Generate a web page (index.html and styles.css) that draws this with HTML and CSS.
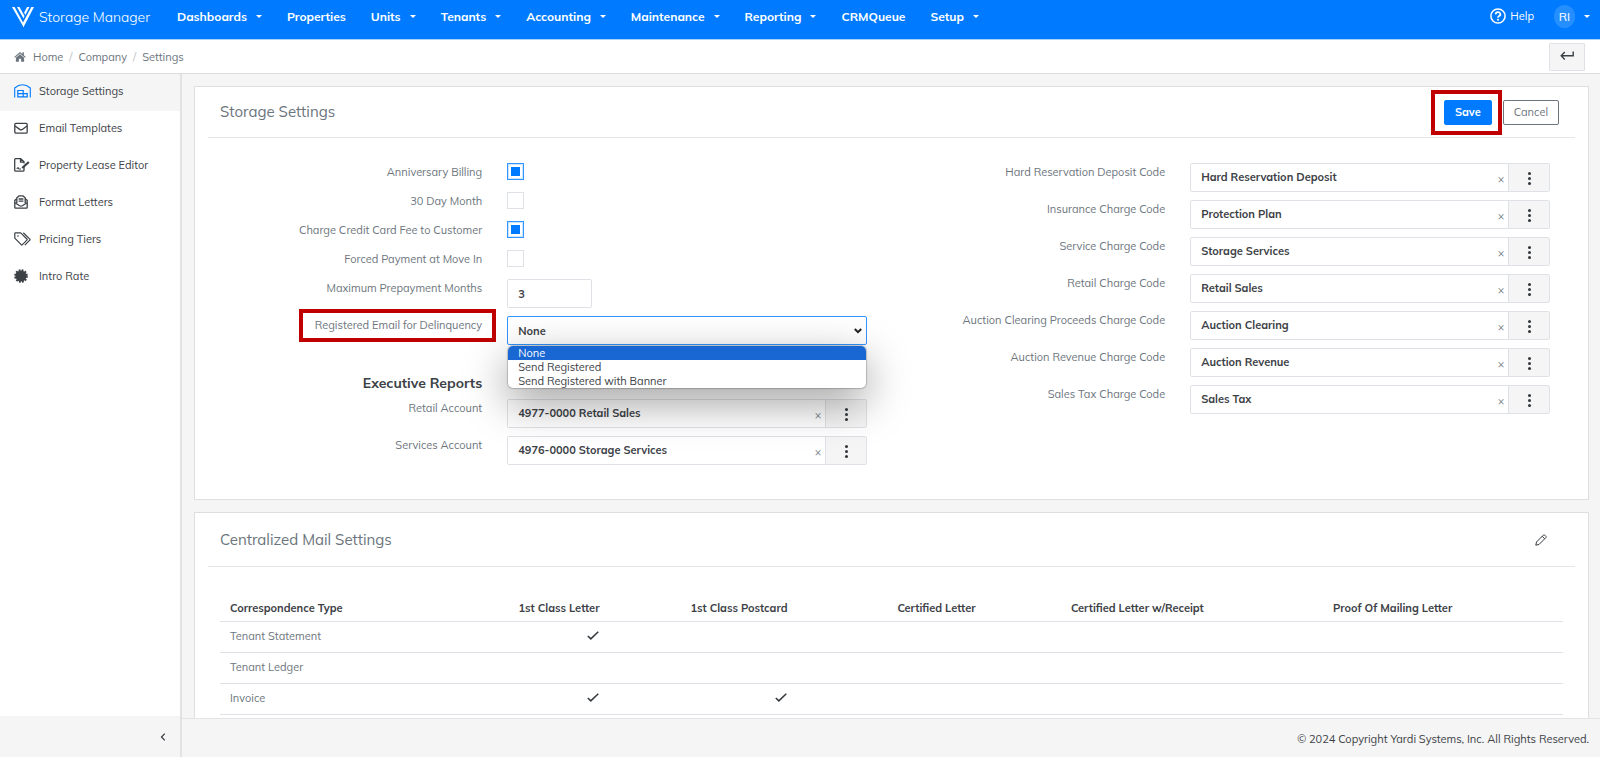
FILE: index.html
```html
<!DOCTYPE html>
<html lang="en">
<head>
    <meta charset="UTF-8">
    <meta name="viewport" content="width=device-width, initial-scale=1.0">
    <title>Storage Settings</title>
    <link rel="stylesheet" href="styles.css">
</head>
<body>
    <header class="navbar">
        <a class="brand" href="#">
            <svg class="brand-logo" viewBox="0 0 22 20" width="22" height="20" aria-hidden="true">
                <path d="M0 0h2.600l8.900 16.500V20z" fill="#fff"/>
                <path d="M5 0h2.500l5 9-1 2.500z" fill="#fff"/>
                <path d="M22 0h-2.600L11 15.500V20h.6z" fill="#fff"/>
                <path d="M17.500 0h-2.400l-3 5.500 1.200 2.400z" fill="#fff"/>
            </svg>
            <span>Storage Manager</span>
        </a>
        <nav class="menu">
            <a class="has-caret" href="#">Dashboards</a>
            <a href="#">Properties</a>
            <a class="has-caret" href="#">Units</a>
            <a class="has-caret" href="#">Tenants</a>
            <a class="has-caret" href="#">Accounting</a>
            <a class="has-caret" href="#">Maintenance</a>
            <a class="has-caret" href="#">Reporting</a>
            <a href="#">CRMQueue</a>
            <a class="has-caret" href="#">Setup</a>
        </nav>
        <div class="user">
            <a class="help" href="#">
                <svg viewBox="0 0 16 16" width="16" height="16" fill="none" stroke="#fff" aria-hidden="true">
                    <circle cx="8" cy="8" r="7.100" stroke-width="1.500"/>
                    <path d="M5.700 6.400a2.300 2.100 0 1 1 3.400 1.700C8.300 8.500 8 8.900 8 9.700" stroke-width="1.700"/>
                    <circle cx="8" cy="11.800" r="1" fill="#fff" stroke="none"/>
                </svg>
                <span>Help</span>
            </a>
            <button class="account has-caret" type="button"><span class="avatar">RI</span></button>
        </div>
    </header>

    <div class="crumb-bar">
        <nav class="crumbs" aria-label="Breadcrumb">
            <svg viewBox="0 0 14 12" width="12" height="11" fill="#6c757d" aria-hidden="true">
                <path d="M7 .8.300 6.500l.8.900L7 2.500l5.900 4.900.8-.9-2.200-1.900V1H9.800v2.200z"/>
                <path d="M2.200 7.400V12h3.500V8.700h2.600V12h3.500V7.400L7 3.500z"/>
            </svg>
            <a href="#">Home</a>
            <span class="slash">/</span>
            <a href="#">Company</a>
            <span class="slash">/</span>
            <a href="#">Settings</a>
        </nav>
        <button class="back" type="button" aria-label="Back">
            <svg viewBox="0 0 14 10" width="14" height="10" fill="none" stroke="#3c4146" stroke-width="1.400" aria-hidden="true">
                <path d="M13.200.5v4.300H1.200M4.800 1 1.200 4.800l3.600 3.700"/>
            </svg>
        </button>
    </div>

    <div class="page">
        <aside class="sidebar">
            <nav class="side-nav">
                <a class="active" href="#">
                    <svg viewBox="0 0 17 14" width="17" height="14" fill="none" stroke="#007bff" stroke-width="1.200" aria-hidden="true">
                        <path d="M.7 13.500V4C3 2 5.500.7 8.500.7S14 2 16.300 4v9.500" stroke-width="1.100"/>
                        <path d="M3.800 12.800V6.500h5.400v3.200h4v3.100zM3.800 9.700h5.400v3.100"/>
                    </svg>
                    Storage Settings
                </a>
                <a href="#">
                    <svg viewBox="0 0 14 12" width="14" height="12" fill="none" stroke="#3c4146" stroke-width="1.300" aria-hidden="true">
                        <rect x=".8" y="1.300" width="12.400" height="9.900" rx="1.200"/>
                        <path d="m1 4 4.700 3.400c.8.600 1.800.6 2.600 0L13 4"/>
                    </svg>
                    Email Templates
                </a>
                <a href="#">
                    <svg viewBox="0 0 16 14" width="16" height="14" fill="none" stroke="#3c4146" stroke-width="1.300" aria-hidden="true">
                        <path d="M10 8.600v3.600c0 .6-.4 1-1 1H1.700c-.6 0-1-.4-1-1V1.700c0-.6.400-1 1-1h5l3.300 3.200v1.600M6.500.8v3.400H10"/>
                        <path d="M2.800 11c1.200-2 1.500-1.500 1.900-.3.500.4 1 .3 2.300.3" stroke-width="1.100"/>
                        <path d="m8.200 10 6.600-6" stroke-width="2.200"/>
                    </svg>
                    Property Lease Editor
                </a>
                <a href="#">
                    <svg viewBox="0 0 14 14" width="14" height="14" fill="none" stroke="#3c4146" stroke-width="1.300" aria-hidden="true">
                        <path d="M2.800 3.800.8 5.400v7c0 .5.300.8.800.8h10.800c.5 0 .8-.3.800-.8v-7l-2-1.600"/>
                        <path d="M2.800 8V2.800L5 .9h4l2.200 1.900V8M1 7.800l4.600 3c.9.500 1.900.5 2.800 0l4.600-3"/>
                        <path d="M4.600 4h4.800M4.600 6.200h4.800" stroke-width="1.300"/>
                    </svg>
                    Format Letters
                </a>
                <a href="#">
                    <svg viewBox="0 0 17 14" width="17" height="14" fill="none" stroke="#3c4146" stroke-width="1.200" stroke-linejoin="round" aria-hidden="true">
                        <path d="M.8 1.500v4.700l6.400 6.500c.4.400.8.400 1.200 0l4.500-4.500c.4-.4.400-.8 0-1.200L6.700.8H1.500c-.4 0-.7.300-.7.700z"/>
                        <path d="m9.300.8 6.500 6.300c.4.400.4.700 0 1.100l-5 5"/>
                        <circle cx="4" cy="4" r=".8" fill="#3c4146" stroke="none"/>
                    </svg>
                    Pricing Tiers
                </a>
                <a href="#">
                    <svg viewBox="0 0 14 14" width="14" height="14" aria-hidden="true">
                        <circle cx="7" cy="7" r="5.600" fill="#3c4146"/>
                        <circle cx="7" cy="7" r="5.800" fill="none" stroke="#3c4146" stroke-width="2" stroke-dasharray="1.800 1.236"/>
                    </svg>
                    Intro Rate
                </a>
            </nav>
            <button class="collapse" type="button" aria-label="Collapse menu">
                <svg viewBox="0 0 6 8" width="6" height="8" fill="none" stroke="#33383d" stroke-width="1.200" aria-hidden="true"><path d="M4.800.7 1.500 4l3.300 3.300"/></svg>
            </button>
        </aside>

        <div class="content">
            <main class="scroll">
                <section class="card">
                    <div class="card-head">
                        <h2>Storage Settings</h2>
                        <div class="actions">
                            <span class="marker marker-save"><button class="btn btn-primary" type="button">Save</button></span>
                            <button class="btn btn-outline" type="button">Cancel</button>
                        </div>
                    </div>
                    <form class="settings">
                        <div class="column">
                            <div class="row row-check">
                                <label for="anniversary">Anniversary Billing</label>
                                <div class="field"><input id="anniversary" type="checkbox" checked></div>
                            </div>
                            <div class="row row-check">
                                <label for="day-month">30 Day Month</label>
                                <div class="field"><input id="day-month" type="checkbox"></div>
                            </div>
                            <div class="row row-check">
                                <label for="card-fee">Charge Credit Card Fee to Customer</label>
                                <div class="field"><input id="card-fee" type="checkbox" checked></div>
                            </div>
                            <div class="row row-check">
                                <label for="forced">Forced Payment at Move In</label>
                                <div class="field"><input id="forced" type="checkbox"></div>
                            </div>
                            <div class="row">
                                <label for="prepay">Maximum Prepayment Months</label>
                                <div class="field"><input class="control short" id="prepay" type="text" value="3"></div>
                            </div>
                            <div class="row">
                                <label for="registered"><span class="marker marker-label">Registered Email for Delinquency</span></label>
                                <div class="field">
                                    <div class="select-wrap">
                                        <select class="control" id="registered">
                                            <option selected>None</option>
                                            <option>Send Registered</option>
                                            <option>Send Registered with Banner</option>
                                        </select>
                                        <svg class="arrow" viewBox="0 0 8 6" width="8" height="6" fill="none" stroke="#222" stroke-width="2" aria-hidden="true"><path d="m.8 1 3.200 3.200L7.200 1"/></svg>
                                        <ul class="options" role="listbox" aria-label="Registered Email for Delinquency">
                                            <li class="selected" role="option" aria-selected="true">None</li>
                                            <li role="option">Send Registered</li>
                                            <li role="option">Send Registered with Banner</li>
                                        </ul>
                                    </div>
                                </div>
                            </div>
                            <h3>Executive Reports</h3>
                            <div class="row">
                                <label for="retail-account">Retail Account</label>
                                <div class="field lookup">
                                    <input class="control" id="retail-account" type="text" value="4977-0000 Retail Sales">
                                    <button class="clear" type="button" aria-label="Clear">×</button>
                                    <button class="more" type="button" aria-label="Browse"></button>
                                </div>
                            </div>
                            <div class="row">
                                <label for="services-account">Services Account</label>
                                <div class="field lookup">
                                    <input class="control" id="services-account" type="text" value="4976-0000 Storage Services">
                                    <button class="clear" type="button" aria-label="Clear">×</button>
                                    <button class="more" type="button" aria-label="Browse"></button>
                                </div>
                            </div>
                        </div>

                        <div class="column">
                            <div class="row">
                                <label for="deposit-code">Hard Reservation Deposit Code</label>
                                <div class="field lookup">
                                    <input class="control" id="deposit-code" type="text" value="Hard Reservation Deposit">
                                    <button class="clear" type="button" aria-label="Clear">×</button>
                                    <button class="more" type="button" aria-label="Browse"></button>
                                </div>
                            </div>
                            <div class="row">
                                <label for="insurance-code">Insurance Charge Code</label>
                                <div class="field lookup">
                                    <input class="control" id="insurance-code" type="text" value="Protection Plan">
                                    <button class="clear" type="button" aria-label="Clear">×</button>
                                    <button class="more" type="button" aria-label="Browse"></button>
                                </div>
                            </div>
                            <div class="row">
                                <label for="service-code">Service Charge Code</label>
                                <div class="field lookup">
                                    <input class="control" id="service-code" type="text" value="Storage Services">
                                    <button class="clear" type="button" aria-label="Clear">×</button>
                                    <button class="more" type="button" aria-label="Browse"></button>
                                </div>
                            </div>
                            <div class="row">
                                <label for="retail-code">Retail Charge Code</label>
                                <div class="field lookup">
                                    <input class="control" id="retail-code" type="text" value="Retail Sales">
                                    <button class="clear" type="button" aria-label="Clear">×</button>
                                    <button class="more" type="button" aria-label="Browse"></button>
                                </div>
                            </div>
                            <div class="row">
                                <label for="clearing-code">Auction Clearing Proceeds Charge Code</label>
                                <div class="field lookup">
                                    <input class="control" id="clearing-code" type="text" value="Auction Clearing">
                                    <button class="clear" type="button" aria-label="Clear">×</button>
                                    <button class="more" type="button" aria-label="Browse"></button>
                                </div>
                            </div>
                            <div class="row">
                                <label for="revenue-code">Auction Revenue Charge Code</label>
                                <div class="field lookup">
                                    <input class="control" id="revenue-code" type="text" value="Auction Revenue">
                                    <button class="clear" type="button" aria-label="Clear">×</button>
                                    <button class="more" type="button" aria-label="Browse"></button>
                                </div>
                            </div>
                            <div class="row">
                                <label for="tax-code">Sales Tax Charge Code</label>
                                <div class="field lookup">
                                    <input class="control" id="tax-code" type="text" value="Sales Tax">
                                    <button class="clear" type="button" aria-label="Clear">×</button>
                                    <button class="more" type="button" aria-label="Browse"></button>
                                </div>
                            </div>
                        </div>
                    </form>
                </section>

                <section class="card mail-card">
                    <div class="card-head">
                        <h2>Centralized Mail Settings</h2>
                        <button class="edit" type="button" aria-label="Edit">
                            <svg viewBox="0 0 12 12" width="12" height="12" fill="none" stroke="#33383d" stroke-width="1" stroke-linejoin="round" aria-hidden="true">
                                <path d="M.8 11.200 1.500 8 8.300 1.200c.5-.5 1-.5 1.500 0l1 1c.5.500.5 1 0 1.500L4 10.500zM7.200 2.300l2.500 2.500"/>
                            </svg>
                        </button>
                    </div>
                    <table class="mail">
                        <colgroup>
                            <col class="col-type">
                            <col class="col-letter">
                            <col class="col-postcard">
                            <col class="col-certified">
                            <col class="col-receipt">
                            <col class="col-proof">
                            <col>
                        </colgroup>
                        <thead>
                            <tr>
                                <th>Correspondence Type</th>
                                <th>1st Class Letter</th>
                                <th>1st Class Postcard</th>
                                <th>Certified Letter</th>
                                <th>Certified Letter w/Receipt</th>
                                <th>Proof Of Mailing Letter</th>
                                <th></th>
                            </tr>
                        </thead>
                        <tbody>
                            <tr>
                                <td>Tenant Statement</td>
                                <td><svg class="tick" viewBox="0 0 12 9" width="12" height="9" role="img" aria-label="Yes"><path d="m.8 5 3 2.900L11.300.8"/></svg></td>
                                <td></td><td></td><td></td><td></td><td></td>
                            </tr>
                            <tr>
                                <td>Tenant Ledger</td>
                                <td></td><td></td><td></td><td></td><td></td><td></td>
                            </tr>
                            <tr>
                                <td>Invoice</td>
                                <td><svg class="tick" viewBox="0 0 12 9" width="12" height="9" role="img" aria-label="Yes"><path d="m.8 5 3 2.900L11.300.8"/></svg></td>
                                <td><svg class="tick" viewBox="0 0 12 9" width="12" height="9" role="img" aria-label="Yes"><path d="m.8 5 3 2.900L11.300.8"/></svg></td>
                                <td></td><td></td><td></td><td></td>
                            </tr>
                        </tbody>
                    </table>
                </section>
            </main>
            <footer class="footer">© 2024 Copyright Yardi Systems, Inc. All Rights Reserved.</footer>
        </div>
    </div>
</body>
</html>
```

FILE: styles.css
```css
* {
    box-sizing: border-box;
}
body {
    display: flex;
    flex-direction: column;
    height: 100vh;
    margin: 0;
    font-family: Mulish, Muli, Lato, sans-serif;
    font-size: 11px;
    line-height: 18px;
    color: #3c4146;
    background-color: #f5f5f5;
    overflow: hidden;
}
a {
    color: inherit;
    text-decoration: none;
}
button, input, select {
    font: inherit;
    color: inherit;
}
button {
    padding: 0;
    border: 0;
    background: none;
}

/* top bar */
.navbar {
    display: flex;
    flex: none;
    height: 40px;
    padding: 0 10px 6px 12px;
    background-color: #007bff;
    border-bottom: 1px solid #a8d0fb;
    color: white;
}
.brand {
    display: flex;
    align-items: center;
    gap: 5px;
    width: 165px;
    font-size: 14px;
    font-weight: 300;
    white-space: nowrap;
}
.menu {
    display: flex;
    align-items: center;
    gap: 25px;
    font-size: 12px;
    font-weight: 700;
}
.has-caret {
    display: flex;
    align-items: center;
    gap: 9px;
}
.has-caret::after {
    content: "";
    border: 3px solid transparent;
    border-top-color: white;
    border-bottom: 0;
}
.user {
    display: flex;
    align-items: center;
    gap: 20px;
    margin-left: auto;
}
.help {
    display: flex;
    align-items: center;
    gap: 4px;
    margin-bottom: 2px;
}
.avatar {
    width: 21px;
    height: 23px;
    border-radius: 50%;
    background-color: #268fff;
    font-size: 12px;
    line-height: 23px;
    text-align: center;
}

/* breadcrumb */
.crumb-bar {
    display: flex;
    flex: none;
    align-items: center;
    justify-content: space-between;
    height: 34px;
    padding: 0 15px 0 14px;
    background-color: white;
    border-bottom: 1px solid #dcdcdc;
    color: #6c757d;
}
.crumbs {
    display: flex;
    align-items: center;
}
.crumbs svg {
    margin-right: 7px;
}
.slash {
    margin: 0 6px;
    color: #bbb;
}
.back {
    width: 36px;
    height: 28px;
    background-color: #f5f5f5;
    border: 1px solid #dee2e6;
    border-radius: 1px;
}

.page {
    display: flex;
    flex: 1;
    min-height: 0;
}

/* sidebar */
.sidebar {
    display: flex;
    flex-direction: column;
    flex: none;
    justify-content: space-between;
    width: 182px;
    background-color: white;
    border-right: 2px solid #e2e2e2;
}
.side-nav a {
    display: grid;
    grid-template-columns: 17px 1fr;
    gap: 8px;
    align-items: center;
    height: 37px;
    padding: 0 14px 4px;
}
.side-nav .active {
    background-color: #f5f5f5;
}
.collapse {
    height: 41px;
    padding-right: 14px;
    background-color: #f5f5f5;
    text-align: right;
}

/* content */
.content {
    display: flex;
    flex: 1;
    flex-direction: column;
    min-width: 0;
}
.scroll {
    display: flex;
    flex: 1;
    flex-direction: column;
    gap: 12px;
    min-height: 0;
    padding: 12px 11px 0 12px;
    overflow: hidden;
}
.card {
    flex: none;
    padding: 0 13px 26px;
    background-color: white;
    border: 1px solid #dfdfdf;
}
.card-head {
    display: flex;
    align-items: center;
    justify-content: space-between;
    height: 51px;
    padding: 0 16px 0 12px;
    border-bottom: 1px solid #e6e6e6;
}
.mail-card .card-head {
    height: 54px;
}
h2 {
    margin: 0;
    font-size: 15px;
    font-weight: 400;
    color: #6c757d;
}
.actions {
    display: flex;
    align-items: center;
}
.btn {
    height: 25px;
    padding: 0 10px;
    border: 1px solid #007bff;
    border-radius: 2px;
    line-height: 23px;
}
.btn-primary {
    background-color: #007bff;
    color: white;
    font-weight: 700;
}
.btn-outline {
    border-color: #6c757d;
    background-color: white;
    color: #6c757d;
}
.marker {
    border: 4px solid #c00000;
}
.marker-save {
    display: flex;
    margin-right: 1px;
    padding: 6px 6px 6px 9px;
}
.edit {
    margin-right: 12px;
}
.edit svg {
    display: block;
}

/* settings form */
.settings {
    display: grid;
    grid-template-columns: 1fr 1fr;
    padding: 25px 0 0 1px;
}
.row {
    display: flex;
    align-items: flex-start;
    margin-bottom: 8px;
}
.row-check {
    height: 17px;
    margin-bottom: 12px;
}
.row label {
    width: 40%;
    color: #6c757d;
    text-align: right;
}
.field {
    flex: 1;
    min-width: 0;
    margin: 0 25px;
}
.marker-label {
    display: inline-block;
    margin: -7px -14px -10px;
    padding: 3px 10px 4px 12px;
}
input[type="checkbox"] {
    display: grid;
    place-content: center;
    width: 17px;
    height: 17px;
    margin: 0;
    appearance: none;
    border: 1px solid #dee2e6;
    background-color: white;
}
input[type="checkbox"]:checked {
    border-color: #3395ff;
    box-shadow: inset 0 0 0 1px #cce5ff;
}
input[type="checkbox"]:checked::before {
    content: "";
    width: 9px;
    height: 9px;
    background-color: #007bff;
}
.control {
    width: 100%;
    height: 29px;
    padding: 0 10px;
    border: 1px solid #dee2e6;
    border-radius: 2px;
    background-color: white;
    font-weight: 700;
}
.short {
    width: 85px;
}
select.control {
    appearance: none;
    border-color: #3395ff;
}
.select-wrap {
    position: relative;
}
.arrow {
    position: absolute;
    top: 12px;
    right: 5px;
}
.options {
    position: absolute;
    z-index: 1;
    top: 30px;
    left: 1px;
    right: 1px;
    margin: 0;
    padding: 0;
    overflow: hidden;
    border-radius: 5px;
    background-color: white;
    box-shadow: 0 0 1px 1px rgba(0, 0, 0, 0.2), 0 14px 44px rgba(0, 0, 0, 0.4);
    list-style: none;
    line-height: 14px;
}
.options li {
    padding: 0 10px;
}
.options .selected {
    background-color: #1967d2;
    color: white;
}
h3 {
    width: 40%;
    margin: 28px 0 6px;
    font-size: 14px;
    font-weight: 700;
    line-height: 20px;
    text-align: right;
}
.lookup {
    display: flex;
    border: 1px solid #dee2e6;
    border-radius: 2px;
}
.lookup .control {
    flex: 1;
    height: 27px;
    padding-bottom: 2px;
    border: 0;
}
.clear {
    width: 14px;
    padding-top: 3px;
    color: #6c757d;
}
.more {
    width: 41px;
    background-color: #f5f5f5;
    border-left: 1px solid #dee2e6;
}
.more::before {
    content: "";
    display: block;
    width: 3px;
    height: 3px;
    margin: 2px auto 0;
    border-radius: 50%;
    background-color: #33383d;
    box-shadow: 0 -5px #33383d, 0 5px #33383d;
}

/* mail table */
.mail {
    width: calc(100% - 24px);
    margin: 30px 12px 0;
    table-layout: fixed;
    border-collapse: collapse;
    color: #6c757d;
}
.col-type {
    width: 17%;
}
.col-letter {
    width: 12%;
}
.col-postcard, .col-certified {
    width: 14%;
}
.col-receipt {
    width: 17%;
}
.col-proof {
    width: 18.5%;
}
.mail th, .mail td {
    height: 31px;
    padding: 0 10px 2px;
    border-bottom: 1px solid #dee2e6;
    text-align: right;
    white-space: nowrap;
}
.mail th {
    height: 24px;
    color: #3c4146;
    font-weight: 700;
}
.mail th:first-child, .mail td:first-child {
    text-align: left;
}
.tick {
    fill: none;
    stroke: #33383d;
    stroke-width: 1.5px;
}

.footer {
    flex: none;
    height: 39px;
    padding: 0 11px;
    border-top: 1px solid #e4e4e4;
    line-height: 40px;
    text-align: right;
}
```
